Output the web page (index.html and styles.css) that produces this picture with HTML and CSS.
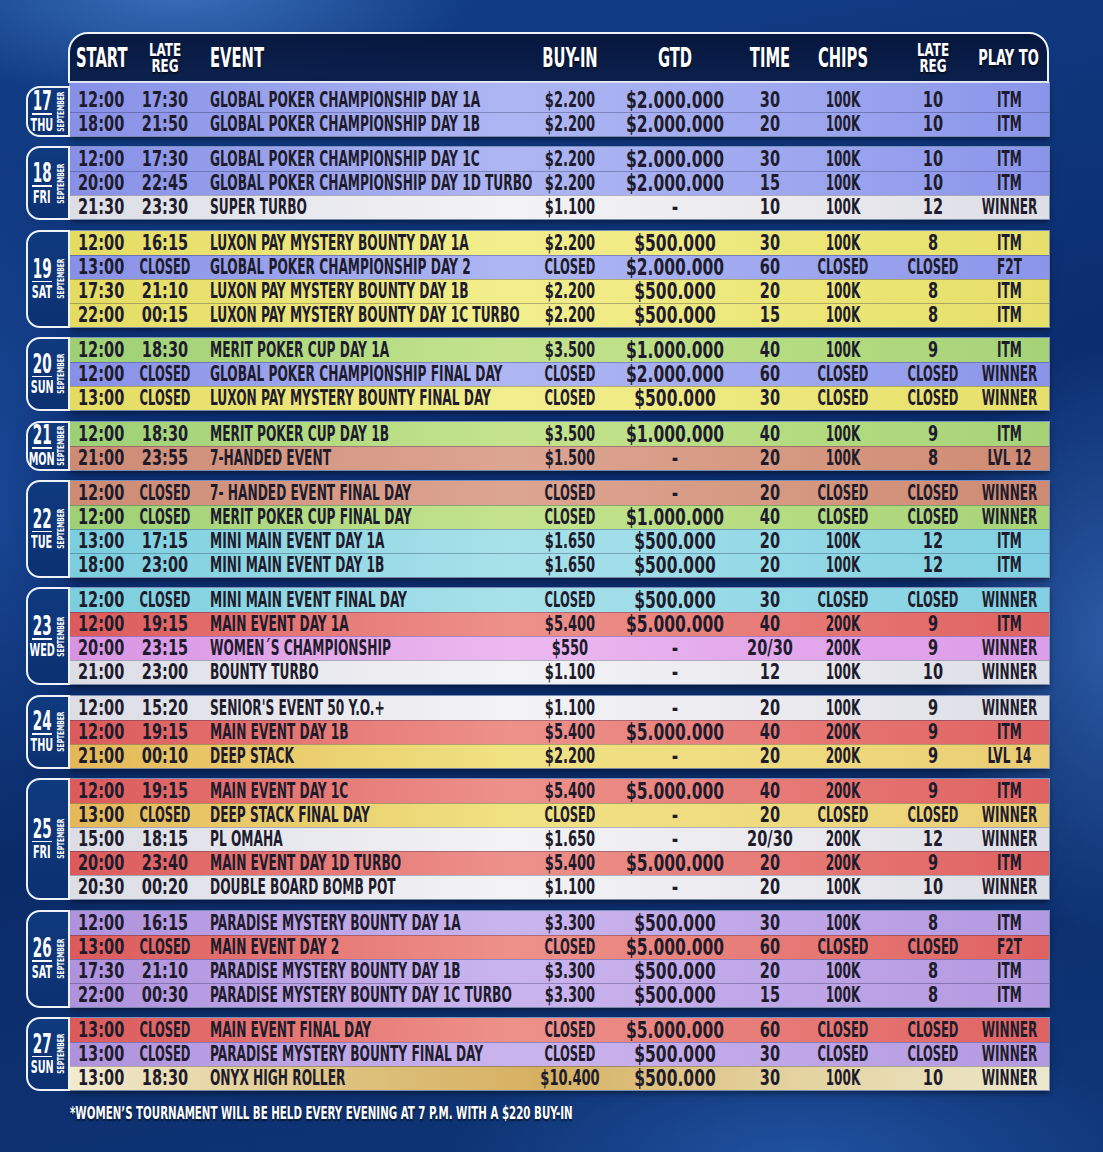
FILE: index.html
```html
<!DOCTYPE html>
<html lang="en">
<head>
<meta charset="utf-8">
<title>Tournament Schedule - September</title>
<link rel="stylesheet" href="styles.css">
</head>
<body>
<div class="page">
  <div class="head">
    <div class="h hl">START</div>
    <div class="h h2">LATE<br>REG</div>
    <div class="h hev">EVENT</div>
    <div class="h">BUY-IN</div>
    <div class="h">GTD</div>
    <div class="h">TIME</div>
    <div class="h">CHIPS</div>
    <div class="h h2">LATE<br>REG</div>
    <div class="h hp">PLAY TO</div>
  </div>

  <div class="groups">
    <div class="grp g1">
      <div class="date"><div class="dn"><div class="num">17</div><div class="bar"></div><div class="day">THU</div></div><div class="mon"><span>SEPTEMBER</span></div></div>
      <div class="rows">
        <div class="row blue first"><div>12:00</div><div>17:30</div><div>GLOBAL POKER CHAMPIONSHIP DAY 1A</div><div>$2.200</div><div>$2.000.000</div><div>30</div><div>100K</div><div>10</div><div>ITM</div></div>
        <div class="row blue"><div>18:00</div><div>21:50</div><div>GLOBAL POKER CHAMPIONSHIP DAY 1B</div><div>$2.200</div><div>$2.000.000</div><div>20</div><div>100K</div><div>10</div><div>ITM</div></div>
      </div>
    </div>

    <div class="grp">
      <div class="date"><div class="dn"><div class="num">18</div><div class="bar"></div><div class="day">FRI</div></div><div class="mon"><span>SEPTEMBER</span></div></div>
      <div class="rows">
        <div class="row blue"><div>12:00</div><div>17:30</div><div>GLOBAL POKER CHAMPIONSHIP DAY 1C</div><div>$2.200</div><div>$2.000.000</div><div>30</div><div>100K</div><div>10</div><div>ITM</div></div>
        <div class="row blue"><div>20:00</div><div>22:45</div><div>GLOBAL POKER CHAMPIONSHIP DAY 1D TURBO</div><div>$2.200</div><div>$2.000.000</div><div>15</div><div>100K</div><div>10</div><div>ITM</div></div>
        <div class="row wht"><div>21:30</div><div>23:30</div><div>SUPER TURBO</div><div>$1.100</div><div>-</div><div>10</div><div>100K</div><div>12</div><div>WINNER</div></div>
      </div>
    </div>

    <div class="grp">
      <div class="date"><div class="dn"><div class="num">19</div><div class="bar"></div><div class="day">SAT</div></div><div class="mon"><span>SEPTEMBER</span></div></div>
      <div class="rows">
        <div class="row yel"><div>12:00</div><div>16:15</div><div>LUXON PAY MYSTERY BOUNTY DAY 1A</div><div>$2.200</div><div>$500.000</div><div>30</div><div>100K</div><div>8</div><div>ITM</div></div>
        <div class="row blue"><div>13:00</div><div class="w">CLOSED</div><div>GLOBAL POKER CHAMPIONSHIP DAY 2</div><div class="w">CLOSED</div><div>$2.000.000</div><div>60</div><div class="w">CLOSED</div><div class="w">CLOSED</div><div>F2T</div></div>
        <div class="row yel"><div>17:30</div><div>21:10</div><div>LUXON PAY MYSTERY BOUNTY DAY 1B</div><div>$2.200</div><div>$500.000</div><div>20</div><div>100K</div><div>8</div><div>ITM</div></div>
        <div class="row yel"><div>22:00</div><div>00:15</div><div>LUXON PAY MYSTERY BOUNTY DAY 1C TURBO</div><div>$2.200</div><div>$500.000</div><div>15</div><div>100K</div><div>8</div><div>ITM</div></div>
      </div>
    </div>

    <div class="grp">
      <div class="date"><div class="dn"><div class="num">20</div><div class="bar"></div><div class="day">SUN</div></div><div class="mon"><span>SEPTEMBER</span></div></div>
      <div class="rows">
        <div class="row grn"><div>12:00</div><div>18:30</div><div>MERIT POKER CUP DAY 1A</div><div>$3.500</div><div>$1.000.000</div><div>40</div><div>100K</div><div>9</div><div>ITM</div></div>
        <div class="row blue"><div>12:00</div><div class="w">CLOSED</div><div>GLOBAL POKER CHAMPIONSHIP FINAL DAY</div><div class="w">CLOSED</div><div>$2.000.000</div><div>60</div><div class="w">CLOSED</div><div class="w">CLOSED</div><div>WINNER</div></div>
        <div class="row yel"><div>13:00</div><div class="w">CLOSED</div><div>LUXON PAY MYSTERY BOUNTY FINAL DAY</div><div class="w">CLOSED</div><div>$500.000</div><div>30</div><div class="w">CLOSED</div><div class="w">CLOSED</div><div>WINNER</div></div>
      </div>
    </div>

    <div class="grp">
      <div class="date"><div class="dn"><div class="num">21</div><div class="bar"></div><div class="day">MON</div></div><div class="mon"><span>SEPTEMBER</span></div></div>
      <div class="rows">
        <div class="row grn"><div>12:00</div><div>18:30</div><div>MERIT POKER CUP DAY 1B</div><div>$3.500</div><div>$1.000.000</div><div>40</div><div>100K</div><div>9</div><div>ITM</div></div>
        <div class="row sal"><div>21:00</div><div>23:55</div><div>7-HANDED EVENT</div><div>$1.500</div><div>-</div><div>20</div><div>100K</div><div>8</div><div>LVL 12</div></div>
      </div>
    </div>

    <div class="grp">
      <div class="date"><div class="dn"><div class="num">22</div><div class="bar"></div><div class="day">TUE</div></div><div class="mon"><span>SEPTEMBER</span></div></div>
      <div class="rows">
        <div class="row sal"><div>12:00</div><div class="w">CLOSED</div><div>7- HANDED EVENT FINAL DAY</div><div class="w">CLOSED</div><div>-</div><div>20</div><div class="w">CLOSED</div><div class="w">CLOSED</div><div>WINNER</div></div>
        <div class="row grn"><div>12:00</div><div class="w">CLOSED</div><div>MERIT POKER CUP FINAL DAY</div><div class="w">CLOSED</div><div>$1.000.000</div><div>40</div><div class="w">CLOSED</div><div class="w">CLOSED</div><div>WINNER</div></div>
        <div class="row cya"><div>13:00</div><div>17:15</div><div>MINI MAIN EVENT DAY 1A</div><div>$1.650</div><div>$500.000</div><div>20</div><div>100K</div><div>12</div><div>ITM</div></div>
        <div class="row cya"><div>18:00</div><div>23:00</div><div>MINI MAIN EVENT DAY 1B</div><div>$1.650</div><div>$500.000</div><div>20</div><div>100K</div><div>12</div><div>ITM</div></div>
      </div>
    </div>

    <div class="grp">
      <div class="date"><div class="dn"><div class="num">23</div><div class="bar"></div><div class="day">WED</div></div><div class="mon"><span>SEPTEMBER</span></div></div>
      <div class="rows">
        <div class="row cya"><div>12:00</div><div class="w">CLOSED</div><div>MINI MAIN EVENT FINAL DAY</div><div class="w">CLOSED</div><div>$500.000</div><div>30</div><div class="w">CLOSED</div><div class="w">CLOSED</div><div>WINNER</div></div>
        <div class="row red"><div>12:00</div><div>19:15</div><div>MAIN EVENT DAY 1A</div><div>$5.400</div><div>$5.000.000</div><div>40</div><div>200K</div><div>9</div><div>ITM</div></div>
        <div class="row pnk"><div>20:00</div><div>23:15</div><div>WOMEN´S CHAMPIONSHIP</div><div>$550</div><div>-</div><div>20/30</div><div>200K</div><div>9</div><div>WINNER</div></div>
        <div class="row wht"><div>21:00</div><div>23:00</div><div>BOUNTY TURBO</div><div>$1.100</div><div>-</div><div>12</div><div>100K</div><div>10</div><div>WINNER</div></div>
      </div>
    </div>

    <div class="grp">
      <div class="date"><div class="dn"><div class="num">24</div><div class="bar"></div><div class="day">THU</div></div><div class="mon"><span>SEPTEMBER</span></div></div>
      <div class="rows">
        <div class="row wht"><div>12:00</div><div>15:20</div><div>SENIOR'S EVENT 50 Y.O.+</div><div>$1.100</div><div>-</div><div>20</div><div>100K</div><div>9</div><div>WINNER</div></div>
        <div class="row red"><div>12:00</div><div>19:15</div><div>MAIN EVENT DAY 1B</div><div>$5.400</div><div>$5.000.000</div><div>40</div><div>200K</div><div>9</div><div>ITM</div></div>
        <div class="row gld"><div>21:00</div><div>00:10</div><div>DEEP STACK</div><div>$2.200</div><div>-</div><div>20</div><div>200K</div><div>9</div><div>LVL 14</div></div>
      </div>
    </div>

    <div class="grp">
      <div class="date"><div class="dn"><div class="num">25</div><div class="bar"></div><div class="day">FRI</div></div><div class="mon"><span>SEPTEMBER</span></div></div>
      <div class="rows">
        <div class="row red"><div>12:00</div><div>19:15</div><div>MAIN EVENT DAY 1C</div><div>$5.400</div><div>$5.000.000</div><div>40</div><div>200K</div><div>9</div><div>ITM</div></div>
        <div class="row gld"><div>13:00</div><div class="w">CLOSED</div><div>DEEP STACK FINAL DAY</div><div class="w">CLOSED</div><div>-</div><div>20</div><div class="w">CLOSED</div><div class="w">CLOSED</div><div>WINNER</div></div>
        <div class="row wht"><div>15:00</div><div>18:15</div><div>PL OMAHA</div><div>$1.650</div><div>-</div><div>20/30</div><div>200K</div><div>12</div><div>WINNER</div></div>
        <div class="row red"><div>20:00</div><div>23:40</div><div>MAIN EVENT DAY 1D TURBO</div><div>$5.400</div><div>$5.000.000</div><div>20</div><div>200K</div><div>9</div><div>ITM</div></div>
        <div class="row wht"><div>20:30</div><div>00:20</div><div>DOUBLE BOARD BOMB POT</div><div>$1.100</div><div>-</div><div>20</div><div>100K</div><div>10</div><div>WINNER</div></div>
      </div>
    </div>

    <div class="grp">
      <div class="date"><div class="dn"><div class="num">26</div><div class="bar"></div><div class="day">SAT</div></div><div class="mon"><span>SEPTEMBER</span></div></div>
      <div class="rows">
        <div class="row pur"><div>12:00</div><div>16:15</div><div>PARADISE MYSTERY BOUNTY DAY 1A</div><div>$3.300</div><div>$500.000</div><div>30</div><div>100K</div><div>8</div><div>ITM</div></div>
        <div class="row red"><div>13:00</div><div class="w">CLOSED</div><div>MAIN EVENT DAY 2</div><div class="w">CLOSED</div><div>$5.000.000</div><div>60</div><div class="w">CLOSED</div><div class="w">CLOSED</div><div>F2T</div></div>
        <div class="row pur"><div>17:30</div><div>21:10</div><div>PARADISE MYSTERY BOUNTY DAY 1B</div><div>$3.300</div><div>$500.000</div><div>20</div><div>100K</div><div>8</div><div>ITM</div></div>
        <div class="row pur"><div>22:00</div><div>00:30</div><div>PARADISE MYSTERY BOUNTY DAY 1C TURBO</div><div>$3.300</div><div>$500.000</div><div>15</div><div>100K</div><div>8</div><div>ITM</div></div>
      </div>
    </div>

    <div class="grp">
      <div class="date"><div class="dn"><div class="num">27</div><div class="bar"></div><div class="day">SUN</div></div><div class="mon"><span>SEPTEMBER</span></div></div>
      <div class="rows">
        <div class="row red"><div>13:00</div><div class="w">CLOSED</div><div>MAIN EVENT FINAL DAY</div><div class="w">CLOSED</div><div>$5.000.000</div><div>60</div><div class="w">CLOSED</div><div class="w">CLOSED</div><div>WINNER</div></div>
        <div class="row pur"><div>13:00</div><div class="w">CLOSED</div><div>PARADISE MYSTERY BOUNTY FINAL DAY</div><div class="w">CLOSED</div><div>$500.000</div><div>30</div><div class="w">CLOSED</div><div class="w">CLOSED</div><div>WINNER</div></div>
        <div class="row onx"><div>13:00</div><div>18:30</div><div>ONYX HIGH ROLLER</div><div>$10.400</div><div>$500.000</div><div>30</div><div>100K</div><div>10</div><div>WINNER</div></div>
      </div>
    </div>
  </div>

  <p class="note">*WOMEN’S TOURNAMENT WILL BE HELD EVERY EVENING AT 7 P.M. WITH A $220 BUY-IN</p>
</div>
</body>
</html>
```
FILE: styles.css
```css
html, body {
  margin: 0;
  padding: 0;
}
body {
  width: 1103px;
  height: 1152px;
  overflow: hidden;
  font-family: "DejaVu Sans Condensed", "DejaVu Sans", sans-serif;
  font-weight: bold;
  background:
    radial-gradient(ellipse 260px 420px at 1110px 640px, rgba(70, 130, 215, 0.55), rgba(70, 130, 215, 0) 70%),
    radial-gradient(ellipse 420px 160px at 180px -10px, rgba(90, 150, 225, 0.55), rgba(90, 150, 225, 0) 70%),
    radial-gradient(ellipse 500px 200px at 800px 1160px, rgba(50, 110, 200, 0.5), rgba(50, 110, 200, 0) 70%),
    radial-gradient(ellipse 120px 500px at 0px 500px, rgba(40, 100, 190, 0.45), rgba(40, 100, 190, 0) 70%),
    linear-gradient(170deg, #123f88 0%, #0c2f72 35%, #0b2b68 65%, #0f3678 100%);
}

.page {
  box-sizing: border-box;
  width: 1103px;
  height: 1152px;
  padding: 32px 0 0 26px;
}

/* ---------- header ---------- */
.head {
  box-sizing: border-box;
  margin-left: 42px;
  width: 981px;
  height: 51px;
  border: 2px solid #eef2fb;
  border-radius: 20px 20px 0 0;
  background: linear-gradient(180deg, rgba(6, 20, 56, 0.92), rgba(10, 30, 72, 0.92));
  display: grid;
  grid-template-columns: 64px 50px 350px 60px 150px 40px 106px 74px 77px;
  padding-left: 6px;
  color: #ffffff;
  text-shadow: 0 2px 2px rgba(0, 0, 0, 0.6);
}
.h {
  display: flex;
  align-items: center;
  justify-content: center;
  white-space: nowrap;
  font-size: 26px;
  line-height: 26px;
  transform: scaleX(0.63);
}
.hl {
  justify-content: flex-start;
  transform-origin: left center;
}
.hev {
  justify-content: flex-start;
  padding-left: 20px;
  transform-origin: 20px center;
}
.h2 {
  font-size: 17px;
  line-height: 16px;
  text-align: center;
  transform: scaleX(0.78);
}
.hp {
  font-size: 21px;
  transform: scaleX(0.69);
}

/* ---------- groups ---------- */
.groups {
  display: flex;
  flex-direction: column;
  gap: 11.4px;
}
.grp {
  display: flex;
}
.date {
  box-sizing: border-box;
  width: 44px;
  margin: -1px 0;
  border: 2px solid #eef2fb;
  border-radius: 14px 0 0 14px;
  background: linear-gradient(180deg, #0f3a7e, #0c3172);
  display: flex;
  align-items: center;
  color: #ffffff;
  position: relative;
  z-index: 1;
}
.g1 .date {
  margin-top: 3px;
}
.dn {
  width: 28px;
  display: flex;
  flex-direction: column;
  align-items: center;
}
.num {
  font-size: 26px;
  line-height: 20px;
  transform: scaleX(0.58);
}
.bar {
  width: 20px;
  height: 1.5px;
  background: #ffffff;
  margin: 2px 0 2px;
}
.day {
  font-size: 18px;
  line-height: 15px;
  transform: scaleX(0.6);
}
.mon {
  width: 9px;
  height: 36px;
  display: flex;
  align-items: center;
  justify-content: center;
}
.mon span {
  writing-mode: vertical-rl;
  transform: rotate(180deg) scaleY(0.7);
  font-size: 9.5px;
  line-height: 9px;
  white-space: nowrap;
}

.rows {
  width: 979px;
  box-shadow: 0 0 0 1px rgba(215, 225, 255, 0.55), 0 3px 6px rgba(0, 0, 0, 0.5);
}
.row {
  box-sizing: border-box;
  height: 24px;
  display: grid;
  grid-template-columns: 62px 50px 350px 60px 150px 40px 106px 74px 79px;
  padding-left: 8px;
  font-size: 21px;
  line-height: 24px;
  color: #1e1c2c;
}
.row + .row {
  box-shadow: inset 0 1px 0 rgba(25, 25, 70, 0.3);
}
.row.first {
  height: 29px;
  padding-top: 5px;
}
.row > div {
  display: flex;
  align-items: center;
  justify-content: center;
  white-space: nowrap;
  transform: scaleX(0.77);
}
.row > div:first-child {
  justify-content: flex-start;
  transform-origin: left center;
}
.row > div:nth-child(3) {
  justify-content: flex-start;
  padding-left: 20px;
  transform: scaleX(0.646);
  transform-origin: 20px center;
}
.row > div:nth-child(4) {
  transform: scaleX(0.69);
}
.row > div:nth-child(5) {
  font-size: 23px;
  transform: scaleX(0.75);
}
.row > div:nth-child(7) {
  transform: scaleX(0.64);
}
.row > div:nth-child(9) {
  transform: scaleX(0.64);
}
.row > div.w {
  transform: scaleX(0.61);
}

/* row colours */
.blue { background: linear-gradient(90deg, #8790e7 0%, #aeb6f3 45%, #9fa8ef 72%, #8a95ea 100%); }
.wht  { background: linear-gradient(90deg, #dcdde5 0%, #f3f3f6 45%, #e9e9ee 75%, #dddee6 100%); }
.yel  { background: linear-gradient(90deg, #e4dc62 0%, #f2ee8c 45%, #ece678 75%, #e6df6a 100%); }
.grn  { background: linear-gradient(90deg, #9dd075 0%, #c4e38c 45%, #b4db80 75%, #a6d378 100%); }
.sal  { background: linear-gradient(90deg, #cd8a74 0%, #dca592 45%, #d5977f 75%, #cf8a73 100%); }
.cya  { background: linear-gradient(90deg, #7acede 0%, #a8e1ea 45%, #92d8e6 75%, #80d0e1 100%); }
.red  { background: linear-gradient(90deg, #dc5a5b 0%, #ee918b 45%, #e67874 75%, #df6262 100%); }
.pnk  { background: linear-gradient(90deg, #d894e4 0%, #ecb8ef 45%, #e2a6ec 75%, #dc9de9 100%); }
.gld  { background: linear-gradient(90deg, #e4b858 0%, #f0e282 45%, #efda7e 75%, #ebcc72 100%); }
.pur  { background: linear-gradient(90deg, #ae92dd 0%, #cab4ed 45%, #bea5e7 75%, #b399e0 100%); }
.onx  { background: linear-gradient(90deg, #f2ebd0 0%, #dcc07a 30%, #d6b062 48%, #e2cf98 70%, #ece8cc 100%); }

/* ---------- footnote ---------- */
.note {
  margin: 13px 0 0 44px;
  font-size: 18px;
  line-height: 20px;
  color: #ffffff;
  white-space: nowrap;
  transform: scaleX(0.634);
  transform-origin: left center;
  text-shadow: 0 2px 2px rgba(0, 0, 0, 0.6);
}
```
